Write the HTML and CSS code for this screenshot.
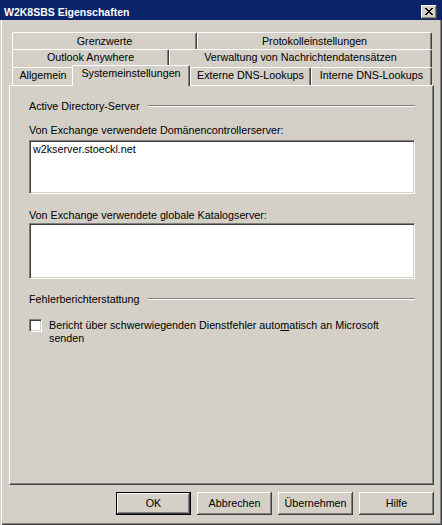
FILE: index.html
```html
<!DOCTYPE html>
<html lang="de">
<head>
<meta charset="utf-8">
<title>W2K8SBS Eigenschaften</title>
<link rel="stylesheet" href="styles.css">
</head>
<body>
<div class="window">
  <div class="titlebar">
    <span class="title">W2K8SBS Eigenschaften</span>
    <span class="close"><svg width="8" height="7" viewBox="0 0 8 7" shape-rendering="crispEdges"><path fill="#000" d="M0 0h2v1H0zM6 0h2v1H6zM1 1h2v1H1zM5 1h2v1H5zM2 2h4v1H2zM3 3h2v1H3zM2 4h4v1H2zM1 5h2v1H1zM5 5h2v1H5zM0 6h2v1H0zM6 6h2v1H6z"/></svg></span>
  </div>
  <div class="body">
    <div class="tabs">
      <div class="row row1">
        <div class="tab t-grenz">Grenzwerte</div>
        <div class="tab t-proto">Protokolleinstellungen</div>
      </div>
      <div class="row">
        <div class="tab t-outlook">Outlook Anywhere</div>
        <div class="tab t-verw">Verwaltung von Nachrichtendatensätzen</div>
      </div>
      <div class="row">
        <div class="tab t-allg">Allgemein</div>
        <div class="tab t-sys active">Systemeinstellungen</div>
        <div class="tab t-ext">Externe DNS-Lookups</div>
        <div class="tab t-int">Interne DNS-Lookups</div>
      </div>
    </div>
    <div class="panel">
      <div class="group"><span>Active Directory-Server</span><span class="rule"></span></div>
      <div class="label l1">Von Exchange verwendete Domänencontrollerserver:</div>
      <div class="listbox lb1"><div class="item">w2kserver.stoeckl.net</div></div>
      <div class="label l2">Von Exchange verwendete globale Katalogserver:</div>
      <div class="listbox lb2"></div>
      <div class="group g2"><span>Fehlerberichterstattung</span><span class="rule"></span></div>
      <label class="check"><span class="box"></span><span class="check-text">Bericht über schwerwiegenden Dienstfehler auto<u>m</u>atisch an Microsoft senden</span></label>
    </div>
    <div class="buttons">
      <button class="btn default">OK</button>
      <button class="btn">Abbrechen</button>
      <button class="btn">Übernehmen</button>
      <button class="btn">Hilfe</button>
    </div>
  </div>
</div>
</body>
</html>
```

FILE: styles.css
```css
* { box-sizing: border-box; }
html, body { margin: 0; padding: 0; }
body {
  width: 442px;
  height: 525px;
  overflow: hidden;
  background: #d4d0c8;
  font-family: "Liberation Sans", Arial, sans-serif;
  font-size: 10.75px;
  line-height: 13px;
  color: #000;
}
.window {
  width: 442px;
  height: 525px;
  background: #d4d0c8;
  box-shadow: inset 1px 0 0 #d4d0c8, inset 2px 0 0 #fff, inset -1px -1px 0 #404040, inset -2px -2px 0 #808080;
  display: flex;
  flex-direction: column;
}
.titlebar {
  height: 20px;
  background: #0a246a;
  display: flex;
  justify-content: space-between;
  align-items: flex-start;
  padding: 0 5px 0 4px;
}
.title {
  color: #fff;
  font-weight: bold;
  font-size: 10.5px;
  line-height: 13px;
  padding-top: 6px;
}
.close {
  display: block;
  margin-top: 5px;
  width: 16px;
  height: 14px;
  padding: 3px 0 0 4px;
  background: #d4d0c8;
  box-shadow: inset -1px -1px 0 #404040, inset 1px 1px 0 #fff, inset -2px -2px 0 #808080;
}
.close svg { display: block; }
.body {
  flex: 1;
  padding: 12px 8px 0 9px;
  display: flex;
  flex-direction: column;
}
.tabs { margin: 0 2px 0 3px; }
.row { display: flex; height: 18px; }
.row1 { height: 17px; }
.tab {
  border-top: 1px solid #fff;
  border-left: 1px solid #fff;
  border-right: 1px solid #404040;
  box-shadow: inset -1px 0 0 #808080;
  border-radius: 2px 2px 0 0;
  padding-top: 1px;
  text-align: center;
  white-space: nowrap;
  background: #d4d0c8;
}
.row1 .tab { padding-top: 2px; }
.t-grenz { width: 185px; }
.t-proto { width: 235px; }
.t-outlook { width: 157px; }
.t-verw { width: 263px; }
.t-allg { width: 62px; }
.t-sys { width: 118px; margin-left: -2px; }
.t-ext { width: 121px; }
.t-int { width: 121px; }
.active {
  position: relative;
  z-index: 1;
  align-self: flex-start;
  height: 21px;
  margin-top: -2px;
}
.panel {
  height: 400px;
  border-top: 1px solid #fff;
  border-left: 1px solid #fff;
  border-right: 1px solid #404040;
  border-bottom: 1px solid #404040;
  box-shadow: inset -1px -1px 0 #808080;
  padding: 14px 18px 0 19px;
  display: flex;
  flex-direction: column;
}
.group {
  display: flex;
  align-items: flex-start;
  gap: 8px;
}
.rule {
  flex: 1;
  margin-top: 5px;
  height: 2px;
  border-top: 1px solid #808080;
  border-bottom: 1px solid #fff;
}
.l1 { margin-top: 11px; }
.l2 { margin-top: 15px; }
.listbox {
  background: #fff;
  border-top: 1px solid #808080;
  border-left: 1px solid #808080;
  border-right: 1px solid #fff;
  border-bottom: 1px solid #fff;
  box-shadow: inset 1px 1px 0 #404040, inset -1px -1px 0 #d4d0c8;
}
.lb1 {
  margin-top: 3px;
  height: 54px;
  padding: 2px 0 0 3px;
}
.lb2 {
  margin-top: 1px;
  height: 56px;
}
.g2 { margin-top: 14px; }
.check {
  display: flex;
  align-items: flex-start;
  gap: 7px;
  margin-top: 13px;
}
.box {
  flex: none;
  width: 13px;
  height: 13px;
  background: #fff;
  border-top: 1px solid #808080;
  border-left: 1px solid #808080;
  border-right: 1px solid #fff;
  border-bottom: 1px solid #fff;
  box-shadow: inset 1px 1px 0 #404040, inset -1px -1px 0 #d4d0c8;
}
.check-text { width: 350px; }
.buttons {
  display: flex;
  justify-content: flex-end;
  gap: 6px;
  margin-top: 7px;
}
.btn {
  width: 75px;
  height: 23px;
  padding: 0;
  font: inherit;
  color: #000;
  background: #d4d0c8;
  border: none;
  border-radius: 0;
  box-shadow: inset -1px -1px 0 #404040, inset 1px 1px 0 #fff, inset -2px -2px 0 #808080;
}
.btn.default {
  border: 1px solid #000;
}
```
